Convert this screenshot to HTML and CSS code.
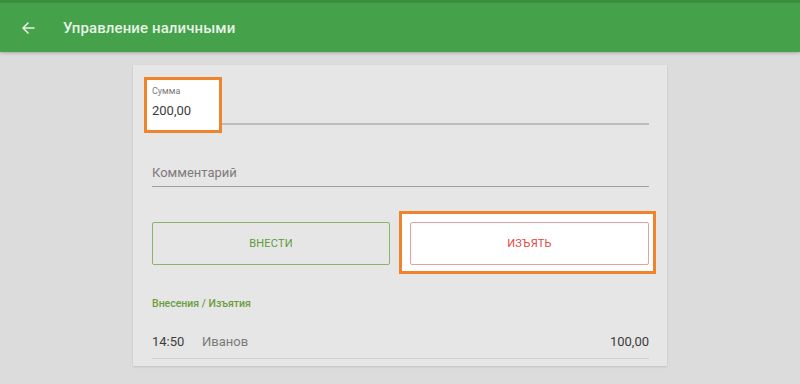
FILE: index.html
```html
<!DOCTYPE html>
<html lang="ru">
<head>
<meta charset="utf-8">
<title>Управление наличными</title>
<link rel="stylesheet" href="styles.css">
</head>
<body>
<header class="appbar">
  <span class="back" aria-label="Назад">
    <svg width="14" height="14" viewBox="0 0 14 14"><path d="M13 7H2M7 2L2 7l5 5" fill="none" stroke="#e8f3e8" stroke-width="1.6" stroke-linecap="round" stroke-linejoin="round"/></svg>
  </span>
  <h1 class="title">Управление наличными</h1>
</header>
<main class="page">
  <section class="card">
    <div class="field field-sum">
      <div class="mark mark-sum"></div>
      <div class="label">Сумма</div>
      <div class="value">200,00</div>
    </div>
    <div class="field field-comment">
      <div class="placeholder">Комментарий</div>
    </div>
    <div class="actions">
      <button class="btn btn-in">ВНЕСТИ</button>
      <div class="btn-wrap">
        <div class="mark mark-out"></div>
        <button class="btn btn-out">ИЗЪЯТЬ</button>
      </div>
    </div>
    <h2 class="section">Внесения / Изъятия</h2>
    <div class="row">
      <span class="time">14:50</span>
      <span class="name">Иванов</span>
      <span class="amount">100,00</span>
    </div>
  </section>
</main>
</body>
</html>
```

FILE: styles.css
```css
* { box-sizing: border-box; }
html, body { margin: 0; padding: 0; }
body {
  width: 800px;
  height: 384px;
  overflow: hidden;
  background: #dcdcdc;
  font-family: Roboto, "Noto Sans", sans-serif;
}
.appbar {
  height: 52px;
  background: #45a14a;
  border-top: 3px solid #3a8f3f;
  display: flex;
  align-items: center;
  box-shadow: 0 1px 3px rgba(0,0,0,0.25);
  position: relative;
  z-index: 2;
}
.back {
  width: 14px;
  height: 14px;
  margin-left: 21px;
  margin-top: 1px;
  display: flex;
}
.title {
  margin: 0 0 0 28px;
  font-size: 15px;
  font-weight: 500;
  color: #e6f3e6;
  letter-spacing: 0.1px;
}
.page {
  display: flex;
  justify-content: center;
  padding-top: 13px;
}
.card {
  width: 534px;
  background: #e6e6e6;
  box-shadow: 0 1px 2px rgba(0,0,0,0.12);
  padding: 20px 18px 7px 19px;
}
.field { position: relative; }
.field-sum {
  padding-bottom: 2px;
  border-bottom: 2px solid #bdbdbd;
}
.mark {
  position: absolute;
  border: 3px solid #f0842c;
  background: #ffffff;
  z-index: 0;
}
.mark-sum {
  left: -8px;
  top: -8px;
  width: 78px;
  height: 56px;
}
.label, .value, .placeholder { position: relative; z-index: 1; }
.label {
  font-size: 9px;
  line-height: 12px;
  color: #7a7a7a;
}
.value {
  margin-top: 4px;
  font-size: 13px;
  line-height: 20px;
  color: #3c3c3c;
}
.field-comment {
  margin-top: 39px;
  padding-bottom: 4px;
  border-bottom: 1px solid #9e9e9e;
}
.placeholder {
  font-size: 13px;
  line-height: 18px;
  color: #7b7b7b;
}
.actions {
  margin-top: 35px;
  display: flex;
  gap: 20px;
}
.btn {
  height: 43px;
  background: transparent;
  font-family: Roboto, "Noto Sans", sans-serif;
  font-size: 11px;
  font-weight: 400;
  letter-spacing: 0.2px;
  border-radius: 2px;
  padding: 0;
}
.btn-in {
  width: 238px;
  flex: none;
  border: 1px solid #8db26b;
  color: #5f9a3a;
}
.btn-wrap {
  position: relative;
  width: 239px;
  flex: none;
  display: flex;
}
.mark-out {
  left: -11px;
  top: -11px;
  width: 257px;
  height: 63px;
}
.btn-out {
  position: relative;
  z-index: 1;
  width: 239px;
  border: 1px solid #e4a3a0;
  color: #e5453e;
}
.section {
  margin: 32px 0 0;
  font-size: 10.5px;
  line-height: 14px;
  font-weight: 500;
  color: #6a9d3f;
}
.row {
  margin-top: 21px;
  display: flex;
  align-items: center;
  font-size: 13px;
  line-height: 20px;
  padding-bottom: 6px;
  border-bottom: 1px solid #cfcfcf;
}
.time { color: #3c3c3c; width: 50px; }
.name { color: #7a7a7a; flex: 1; }
.amount { color: #3c3c3c; }
```
